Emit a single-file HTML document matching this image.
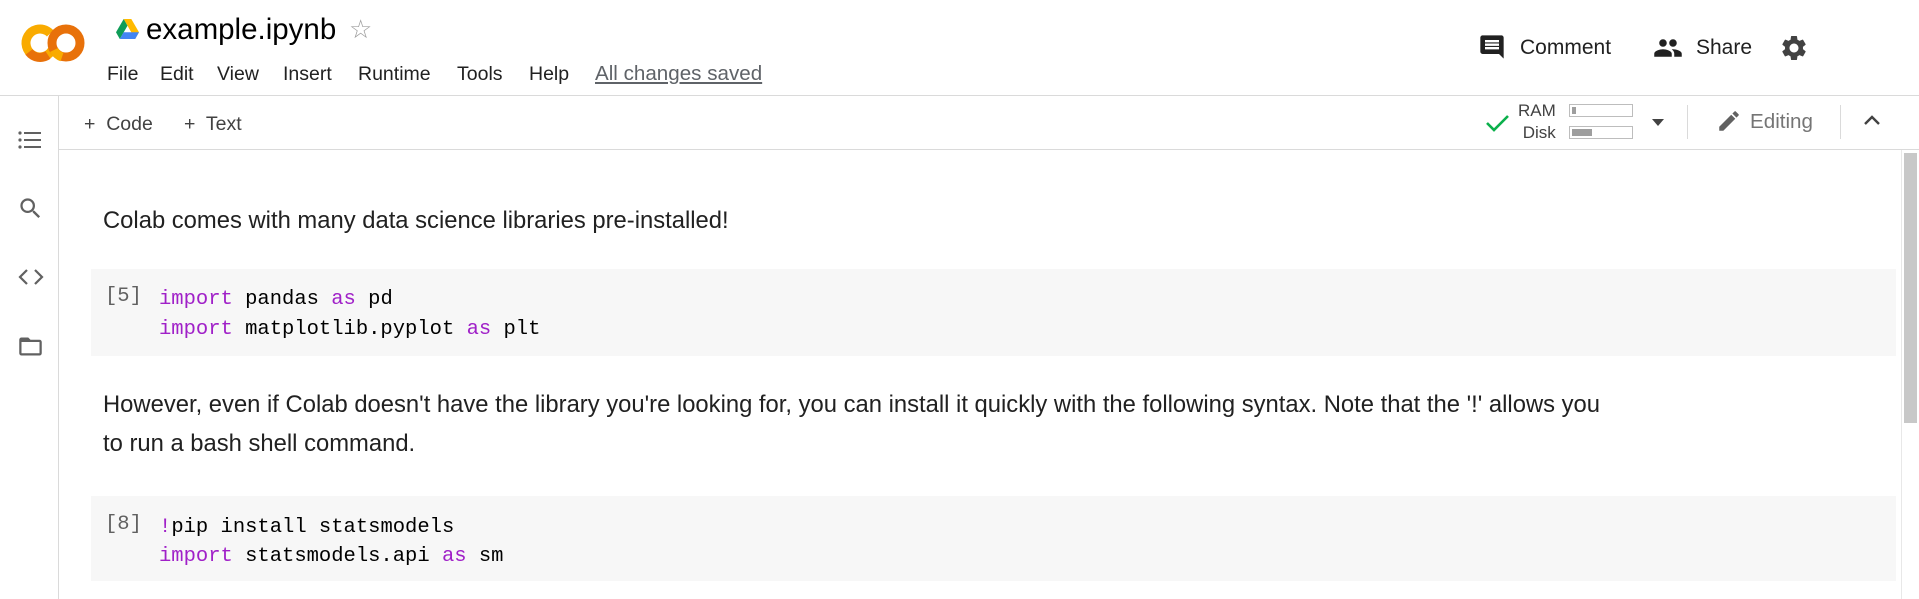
<!DOCTYPE html>
<html><head><meta charset="utf-8"><style>
*{margin:0;padding:0;box-sizing:border-box}
body{width:1919px;height:599px;overflow:hidden;background:#fff;font-family:"Liberation Sans",Arial,sans-serif;color:#212121;position:relative}
.a{position:absolute;white-space:nowrap}
.menu{font-size:19.5px;color:#212121;top:63px}
.mono{font-family:"Liberation Mono",monospace;font-size:20.5px;color:#000}
.kw{color:#a020c8}
.cell{position:absolute;left:91px;width:1805px;background:#f7f7f7}
.g{color:#616161}
</style></head><body>
<!-- header -->
<svg class="a" style="left:20px;top:22px" width="66" height="42" viewBox="0 0 66 42">
 <circle cx="20" cy="21" r="14" fill="none" stroke="#F9AB00" stroke-width="9" stroke-dasharray="70 18" transform="rotate(30 20 21)"/>
 <path d="M9 30 A14 14 0 0 0 28 33" fill="none" stroke="#E8710A" stroke-width="9"/>
 <circle cx="46" cy="21" r="14" fill="none" stroke="#E8710A" stroke-width="9"/>
 <path d="M34 28 A14 14 0 0 0 42 35" fill="none" stroke="#F9AB00" stroke-width="9"/>
</svg>
<svg class="a" style="left:116px;top:19px" width="23" height="20" viewBox="0 0 23 20">
 <polygon points="7.7,0 15.3,0 23,13.3 19.2,20 11.5,6.7" fill="#FFBA00"/>
 <polygon points="7.7,0 11.5,6.7 3.8,20 0,13.3" fill="#0F9D58"/>
 <polygon points="3.8,20 7.6,13.3 23,13.3 19.2,20" fill="#4285F4"/>
</svg>
<div class="a" style="left:146px;top:13px;font-size:29.5px;color:#000">example.ipynb</div>
<div class="a" style="left:349px;top:14px;font-size:26px;color:#9e9e9e">☆</div>
<div class="a menu" style="left:107px">File</div>
<div class="a menu" style="left:160px">Edit</div>
<div class="a menu" style="left:217px">View</div>
<div class="a menu" style="left:283px">Insert</div>
<div class="a menu" style="left:358px">Runtime</div>
<div class="a menu" style="left:457px">Tools</div>
<div class="a menu" style="left:529px">Help</div>
<div class="a menu" style="left:595px;color:#5f6368;text-decoration:underline;font-size:20.6px;top:62px">All changes saved</div>

<svg class="a" style="left:1478px;top:33px" width="28" height="28" viewBox="0 0 24 24"><path d="M21.99 4c0-1.1-.89-2-1.99-2H4c-1.1 0-2 .9-2 2v12c0 1.1.9 2 2 2h14l4 4-.01-18zM18 14H6v-2h12v2zm0-3H6V9h12v2zm0-3H6V6h12v2z" fill="#212121"/></svg>
<div class="a" style="left:1520px;top:36px;font-size:21px">Comment</div>
<svg class="a" style="left:1653px;top:33px" width="30" height="30" viewBox="0 0 24 24"><path d="M16 11c1.66 0 2.99-1.34 2.99-3S17.66 5 16 5c-1.660 0-3 1.34-3 3s1.34 3 3 3zm-8 0c1.66 0 2.99-1.34 2.99-3S9.66 5 8 5C6.34 5 5 6.34 5 8s1.34 3 3 3zm0 2c-2.33 0-7 1.17-7 3.5V19h14v-2.5c0-2.33-4.670-3.5-7-3.5zm8 0c-.29 0-.62.02-.97.05 1.16.84 1.97 1.97 1.97 3.45V19h6v-2.5c0-2.33-4.67-3.5-7-3.5z" fill="#212121"/></svg>
<div class="a" style="left:1696px;top:36px;font-size:21px">Share</div>
<svg class="a" style="left:1779px;top:33px" width="30" height="30" viewBox="0 0 24 24"><path d="M19.14 12.94c.04-.3.06-.61.06-.94 0-.32-.02-.64-.07-.94l2.03-1.58a.49.49 0 00.12-.61l-1.92-3.32a.49.49 0 00-.59-.22l-2.39.96c-.5-.38-1.030-.7-1.62-.94l-.36-2.54a.48.48 0 00-.48-.41h-3.84c-.24 0-.43.17-.47.41l-.36 2.54c-.59.24-1.13.57-1.62.94l-2.39-.96a.49.49 0 00-.59.22L2.74 8.87c-.12.21-.08.47.12.61l2.03 1.58c-.05.3-.09.63-.09.94s.02.64.07.94l-2.03 1.58a.49.49 0 00-.12.61l1.92 3.32c.12.22.37.29.59.22l2.39-.96c.5.38 1.03.7 1.62.94l.36 2.54c.05.24.24.41.48.41h3.84c.24 0 .44-.17.47-.41l.36-2.54c.59-.24 1.13-.56 1.62-.94l2.39.96c.22.08.47 0 .59-.22l1.92-3.32c.12-.22.07-.47-.12-.61l-2.01-1.58zM12 15.6c-1.98 0-3.6-1.62-3.6-3.6s1.62-3.6 3.6-3.6 3.6 1.62 3.6 3.6-1.62 3.6-3.6 3.6z" fill="#424242"/></svg>

<div class="a" style="left:0;top:95px;width:1919px;border-top:1px solid #dadada"></div>
<!-- sidebar -->
<div class="a" style="left:58px;top:96px;height:503px;border-left:1px solid #dadada"></div>
<svg class="a" style="left:17px;top:128px" width="28" height="24" viewBox="0 0 28 24" fill="#616161"><circle cx="3" cy="5" r="1.6"/><circle cx="3" cy="12" r="1.6"/><circle cx="3" cy="19" r="1.6"/><rect x="7" y="4" width="17" height="2"/><rect x="7" y="11" width="17" height="2"/><rect x="7" y="18" width="17" height="2"/></svg>
<svg class="a" style="left:17px;top:195px" width="27" height="27" viewBox="0 0 24 24"><path d="M15.5 14h-.79l-.28-.27A6.470 6.47 0 0016 9.5 6.5 6.5 0 109.5 16c1.61 0 3.09-.59 4.23-1.57l.27.28v.79l5 4.99L20.49 19l-4.99-5zm-6 0C7.01 14 5 11.99 5 9.5S7.01 5 9.5 5 14 7.01 14 9.5 11.99 14 9.5 14z" fill="#616161"/></svg>
<svg class="a" style="left:17px;top:264px" width="28" height="26" viewBox="0 0 28 26"><path d="M10 6 L3 13 L10 20 M18 6 L25 13 L18 20" fill="none" stroke="#616161" stroke-width="2.2"/></svg>
<svg class="a" style="left:17px;top:333px" width="27" height="27" viewBox="0 0 24 24"><path d="M20 6h-8l-2-2H4c-1.1 0-2 .9-2 2v12c0 1.1.9 2 2 2h16c1.1 0 2-.9 2-2V8c0-1.1-.9-2-2-2zm0 12H4V8h16v10z" fill="#616161"/></svg>
<!-- toolbar -->
<div class="a" style="left:84px;top:113px;font-size:19.5px;color:#424242">+&nbsp; Code</div>
<div class="a" style="left:184px;top:113px;font-size:19.5px;color:#424242">+&nbsp; Text</div>
<svg class="a" style="left:1485px;top:112px" width="25" height="22" viewBox="0 0 25 22"><path d="M2 11 L9 18 L23 4" fill="none" stroke="#0bb04b" stroke-width="2.6"/></svg>
<div class="a" style="left:1518px;top:100px;font-size:17px;color:#424242;line-height:22px">RAM<br>&nbsp;Disk</div>
<div class="a" style="left:1569px;top:104px;width:64px;height:13px;border:1px solid #bdbdbd"><div style="margin:2px;width:4px;height:7px;background:#9e9e9e"></div></div>
<div class="a" style="left:1569px;top:126px;width:64px;height:13px;border:1px solid #bdbdbd"><div style="margin:2px;width:20px;height:7px;background:#9e9e9e"></div></div>
<div class="a" style="left:1652px;top:119px;border-left:6px solid transparent;border-right:6px solid transparent;border-top:7px solid #424242"></div>
<div class="a" style="left:1687px;top:105px;height:34px;border-left:1px solid #dadada"></div>
<svg class="a" style="left:1716px;top:108px" width="26" height="26" viewBox="0 0 24 24"><path d="M3 17.25V21h3.75L17.81 9.94l-3.75-3.75L3 17.25zM20.71 7.04a1 1 0 000-1.41l-2.34-2.34a1 1 0 00-1.41 0l-1.83 1.83 3.75 3.75 1.83-1.83z" fill="#616161"/></svg>
<div class="a" style="left:1750px;top:110px;font-size:20.6px;color:#757575">Editing</div>
<div class="a" style="left:1840px;top:105px;height:34px;border-left:1px solid #dadada"></div>
<svg class="a" style="left:1862px;top:112px" width="20" height="16" viewBox="0 0 20 16"><path d="M3 12 L10 5 L17 12" fill="none" stroke="#424242" stroke-width="2.4"/></svg>
<div class="a" style="left:59px;top:149px;width:1860px;border-top:1px solid #dadada"></div>
<!-- scrollbar -->
<div class="a" style="left:1901px;top:150px;width:18px;height:449px;background:#fff;border-left:1px solid #e8e8e8"></div>
<div class="a" style="left:1904px;top:153px;width:13px;height:270px;background:#c8c8c8"></div>
<!-- content -->
<div class="a" style="left:103px;top:207px;font-size:23.8px">Colab comes with many data science libraries pre-installed!</div>
<div class="cell" style="top:269px;height:87px"></div>
<div class="a mono g" style="left:105px;top:285px">[5]</div>
<div class="a mono" style="left:159px;top:285px;line-height:30px"><span class="kw">import</span> pandas <span class="kw">as</span> pd<br><span class="kw">import</span> matplotlib.pyplot <span class="kw">as</span> plt</div>
<div class="a" style="left:103px;top:385px;font-size:23.8px;line-height:39px">However, even if Colab doesn't have the library you're looking for, you can install it quickly with the following syntax. Note that the '!' allows you<br>to run a bash shell command.</div>
<div class="cell" style="top:496px;height:85px"></div>
<div class="a mono g" style="left:105px;top:513px">[8]</div>
<div class="a mono" style="left:159px;top:513px;line-height:29px"><span class="kw">!</span>pip install statsmodels<br><span class="kw">import</span> statsmodels.api <span class="kw">as</span> sm</div>
</body></html>
